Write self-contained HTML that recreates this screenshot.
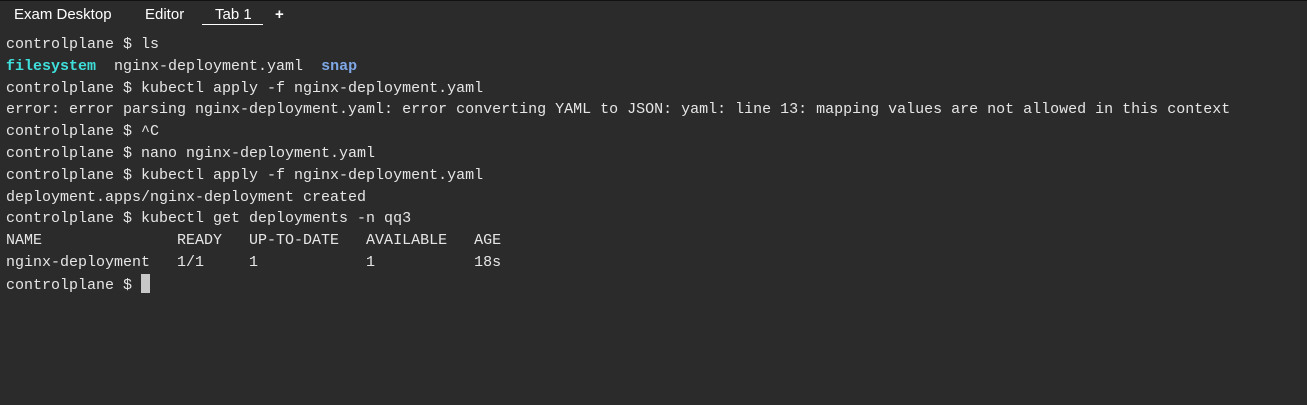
<!DOCTYPE html>
<html><head><style>
body{margin:0;width:1307px;height:405px;background:#2b2b2b;overflow:hidden;border-top:1px solid #111;box-sizing:border-box;}
.tabs{position:absolute;top:0;left:0;height:30px;font-family:"Liberation Sans",sans-serif;font-size:15px;color:#fff;}
.tabs span{position:absolute;top:6px;white-space:nowrap;}
.ul{position:absolute;left:202px;top:24px;width:61px;height:1px;background:#fff;}
pre{position:absolute;left:6px;top:34px;margin:0;font-family:"Liberation Mono",monospace;font-size:15px;letter-spacing:0;line-height:21.8px;color:#e6e6e6;}
.c{color:#3fe0dc;font-weight:bold}.b{color:#7fa8e6;font-weight:bold}
.cur{display:inline-block;width:9px;height:19px;background:#c8c8c8;vertical-align:-4px;}
</style></head><body>
<div class="tabs"><span style="left:14px">Exam Desktop</span><span style="left:145px">Editor</span><span style="left:215px">Tab 1</span><span style="left:275px;font-weight:bold">+</span><div class="ul"></div></div>
<pre>controlplane $ ls
<span class="c">filesystem</span>  nginx-deployment.yaml  <span class="b">snap</span>
controlplane $ kubectl apply -f nginx-deployment.yaml
error: error parsing nginx-deployment.yaml: error converting YAML to JSON: yaml: line 13: mapping values are not allowed in this context
controlplane $ ^C
controlplane $ nano nginx-deployment.yaml
controlplane $ kubectl apply -f nginx-deployment.yaml
deployment.apps/nginx-deployment created
controlplane $ kubectl get deployments -n qq3
NAME               READY   UP-TO-DATE   AVAILABLE   AGE
nginx-deployment   1/1     1            1           18s
controlplane $ <span class="cur"></span></pre>
</body></html>
